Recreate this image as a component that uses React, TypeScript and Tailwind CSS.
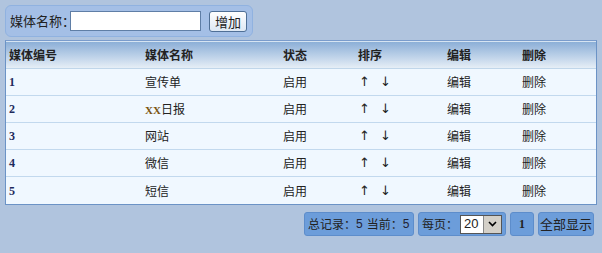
const rows = [
  { id: '1', name: '宣传单', xx: false },
  { id: '2', name: '日报', xx: true },
  { id: '3', name: '网站', xx: false },
  { id: '4', name: '微信', xx: false },
  { id: '5', name: '短信', xx: false },
];

const cols = 'grid grid-cols-[139px_138px_75px_89px_75px_1fr]';

export default function App() {
  return (
    <div className="w-[602px] h-[253px] bg-[#b0c4de] px-[5px] pt-[5px] text-[12px] text-[#222] font-['Noto_Sans_CJK_SC','Noto_Sans',sans-serif]">
      <div className="w-[248px] h-[32px] flex items-center rounded-[6px] border border-[#90b2e0] bg-[#a4bfe6] pl-[4px]">
        <span className="text-[13px] whitespace-nowrap">媒体名称：</span>
        <input className="ml-[-5px] w-[131px] h-[20px] bg-white border border-[#5f7ea6] outline-none" />
        <button className="ml-[8px] w-[38px] h-[21px] rounded-[3px] border border-[#4f6f96] bg-gradient-to-b from-white to-[#dde8f4] text-[13px] leading-none">
          增加
        </button>
      </div>

      <div className="mt-[3px] w-[592px] border border-[#6b93c6] border-t-[#7a9ccc]">
        <div className={`${cols} h-[28px] items-center font-bold bg-gradient-to-b from-[#8cafd7] to-[#e6eef6] border-t border-[#d6e4f2] border-b border-b-[#c0d6ea]`}>
          <span className="pl-[3px]">媒体编号</span>
          <span>媒体名称</span>
          <span>状态</span>
          <span>排序</span>
          <span>编辑</span>
          <span>删除</span>
        </div>
        {rows.map((r, i) => (
          <div
            key={r.id}
            className={`${cols} h-[27px] items-center bg-[#f0f8ff] ${i < rows.length - 1 ? 'border-b border-[#c2d9ee]' : ''}`}
          >
            <span className="pl-[3px] font-bold text-[#1e2a5c] font-['Liberation_Serif',serif]">{r.id}</span>
            <span>
              {r.xx && <span className="font-bold font-['Liberation_Serif',serif] text-[11px] text-[#7a5410]">XX</span>}
              {r.name}
            </span>
            <span>启用</span>
            <span className="flex gap-[10px] pl-[1px] font-['DejaVu_Sans',sans-serif] text-[13px]">
              <span>↑</span>
              <span>↓</span>
            </span>
            <span>编辑</span>
            <span>删除</span>
          </div>
        ))}
      </div>

      <div className="mt-[7px] flex justify-end gap-[4px] pr-[3px] text-[12px]">
        <div className="h-[24px] w-[110px] flex items-center px-[3px] whitespace-nowrap rounded-[3px] border border-[#5d8dcb] bg-[#6c9dda]">
          总记录：<span className="text-[#223] font-['Liberation_Sans',sans-serif]">5</span>
          <span className="ml-[4px]">当前：</span>
          <span className="text-[#223] font-['Liberation_Sans',sans-serif]">5</span>
        </div>
        <div className="h-[24px] w-[88px] flex items-center pl-[3px] pr-[3px] whitespace-nowrap rounded-[3px] border border-[#5d8dcb] bg-[#6c9dda]">
          <span className="shrink-0">每页：</span>
          <div className="shrink-0 ml-[2px] w-[42px] h-[19px] flex items-center bg-white border border-[#555]">
            <span className="flex-1 pl-[3px] font-['Liberation_Sans',sans-serif] text-[13px]">20</span>
            <span className="w-[18px] h-[17px] flex items-center justify-center bg-[#d4d0c8] border-l border-[#888]">
              <svg width="9" height="6" viewBox="0 0 9 6">
                <path d="M1 1 L4.5 4.5 L8 1" stroke="#000" strokeWidth="1.6" fill="none" />
              </svg>
            </span>
          </div>
        </div>
        <div className="h-[24px] w-[24px] flex items-center justify-center rounded-[3px] border border-[#5d8dcb] bg-[#6c9dda] font-bold font-['Liberation_Serif',serif]">
          1
        </div>
        <div className="h-[24px] w-[56px] flex items-center justify-center whitespace-nowrap rounded-[3px] border border-[#5d8dcb] bg-[#6c9dda] text-[13px]">
          全部显示
        </div>
      </div>
    </div>
  );
}
